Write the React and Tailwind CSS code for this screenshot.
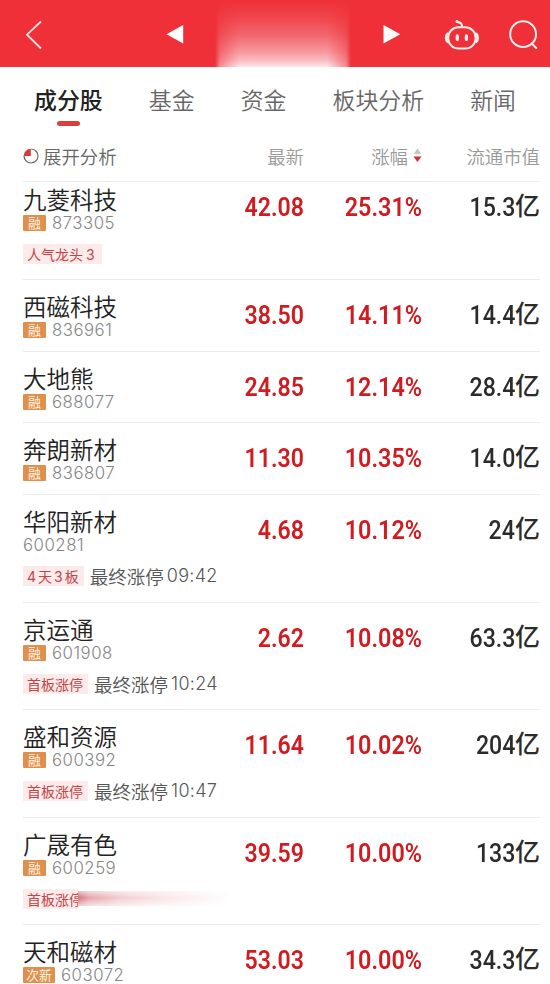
import React from 'react';

const tabs = [
  { label: '成分股', active: true },
  { label: '基金' },
  { label: '资金' },
  { label: '板块分析' },
  { label: '新闻' },
];

const stocks = [
  { name: '九菱科技', badge: '融', code: '873305', price: '42.08', change: '25.31%', cap: '15.3', tag: '人气龙头3' },
  { name: '西磁科技', badge: '融', code: '836961', price: '38.50', change: '14.11%', cap: '14.4' },
  { name: '大地熊', badge: '融', code: '688077', price: '24.85', change: '12.14%', cap: '28.4' },
  { name: '奔朗新材', badge: '融', code: '836807', price: '11.30', change: '10.35%', cap: '14.0' },
  { name: '华阳新材', code: '600281', price: '4.68', change: '10.12%', cap: '24', tag: '4天3板', time: '09:42' },
  { name: '京运通', badge: '融', code: '601908', price: '2.62', change: '10.08%', cap: '63.3', tag: '首板涨停', time: '10:24' },
  { name: '盛和资源', badge: '融', code: '600392', price: '11.64', change: '10.02%', cap: '204', tag: '首板涨停', time: '10:47' },
  { name: '广晟有色', badge: '融', code: '600259', price: '39.59', change: '10.00%', cap: '133', tag: '首板涨停', masked: true },
  { name: '天和磁材', badge: '次新', code: '603072', price: '53.03', change: '10.00%', cap: '34.3' },
];

function Header() {
  return (
    <header className="flex h-[67px] shrink-0 items-start bg-[#ef3038] text-white">
      <svg className="ml-[25px] mt-[20px] h-[30px] w-[18px]" viewBox="0 0 18 30" fill="none" stroke="#ffe3e0" strokeWidth="1.8">
        <path d="M16 1.5 2 14.7 16 28.5" />
      </svg>
      <svg className="ml-[123px] mt-[25px] h-[19px] w-[18px]" viewBox="0 0 18 19" fill="currentColor">
        <path d="M0.5 9.3 17.2 0V18.6Z" />
      </svg>
      <div className="ml-[31px] h-[67px] w-[136px] bg-[linear-gradient(to_bottom,#ef3038_0%,#f0444b_25%,#f2666d_52%,#f6959b_76%,#f9bcc1_90%,#fde6e8_100%)] [mask-image:linear-gradient(to_right,transparent,#0008_5px,#000_24px,#000_112px,#0008_131px,transparent)]" />
      <svg className="ml-[32px] mt-[25px] h-[19px] w-[18px]" viewBox="0 0 18 19" fill="currentColor">
        <path d="M0.5 0 17.2 9.3 0.5 18.6Z" />
      </svg>
      <svg className="ml-[43px] mt-[18px] h-[34px] w-[36px]" viewBox="0 0 36 34" fill="none" stroke="#fff0ed" strokeWidth="2" strokeLinecap="round">
        <rect x="4.2" y="9.2" width="27.4" height="21.4" rx="10.3" />
        <path d="M18 9V7.6C18 5.4 16.4 4.4 13.2 3.9" />
        <circle cx="13" cy="3.5" r="1.1" fill="#fff0ed" strokeWidth="1" />
        <path d="M3.6 15.8C1.6 17.2 1.6 22.4 3.6 23.8M32.2 15.8C34.2 17.2 34.2 22.4 32.2 23.8" strokeWidth="2.6" />
        <path d="M13.3 17.8V21.4M22.4 17.8V21.4" strokeWidth="3.2" />
      </svg>
      <svg className="ml-[28px] mt-[19px] h-[32px] w-[32px]" viewBox="0 0 32 32" fill="none" stroke="#fff0ed" strokeWidth="2" strokeLinecap="round">
        <circle cx="15.1" cy="15.2" r="12.9" />
        <path d="M23.8 24.6 28.3 29" />
      </svg>
    </header>
  );
}

function Tabs() {
  return (
    <nav className="flex h-[65px] shrink-0 items-start justify-between pl-[34px] pr-[34px] pt-[15px] text-[22.9px] leading-[34px] text-[#666]">
      {tabs.map(({ label, active }) => (
        <div key={label} className={active ? 'flex flex-col items-center font-medium text-[#222]' : 'font-[350]'}>
          {label}
          {active && <span className="mt-[5px] h-[5px] w-[23px] rounded-full bg-[#d9403c]" />}
        </div>
      ))}
    </nav>
  );
}

function ColumnHeads() {
  return (
    <div className="ml-[23px] mr-[10px] flex h-[50px] shrink-0 items-center border-b border-[#ebebeb] pb-[2px] text-[18.4px] font-[350] leading-[26px] text-[#999]">
      <div className="flex w-[170px] items-center text-[#666]">
        <svg className="mr-[4px] h-[16px] w-[16px]" viewBox="0 0 16 16" fill="none">
          <path d="M8.3 1A7 7 0 1 1 1 8" stroke="#666" strokeWidth="1.2" />
          <path d="M7.8 8V0.8A7.2 7.2 0 0 0 0.6 8Z" fill="#d83a3a" />
        </svg>
        展开分析
      </div>
      <div className="w-[111px] text-right">最新</div>
      <div className="flex w-[118px] items-center justify-end">
        涨幅
        <svg className="ml-[5px] h-[15px] w-[9px]" viewBox="0 0 9 15">
          <path d="M4.5 0.5 8.3 6H0.7Z" fill="#c4c4c4" />
          <path d="M0.5 8.5H8.5L4.5 14Z" fill="#cc3038" />
        </svg>
      </div>
      <div className="flex-1 text-right">流通市值</div>
    </div>
  );
}

function StockRow({ stock, first }) {
  const { name, badge, code, price, change, cap, tag, time, masked } = stock;
  return (
    <div
      className={`ml-[23px] mr-[10px] flex shrink-0 items-start border-b border-[#ebebeb] ${
        first ? 'h-[98px] pt-[4px]' : tag ? 'h-[107.6px] pt-[13px]' : 'h-[71.7px] pt-[13px]'
      }`}
    >
      <div className="w-[200px]">
        <div className="h-[28px] text-[23.5px] font-[350] leading-[27px] text-[#222]">{name}</div>
        <div className="flex h-[18px] items-center">
          {badge && (
            <span
              className={`mr-[6px] flex h-[16px] items-center justify-center whitespace-nowrap rounded-[1px] bg-[#e08f4c] text-[12.8px] leading-[16px] text-[#fff3e2] ${
                badge.length > 1 ? 'w-[32px]' : 'w-[23px]'
              }`}
            >
              {badge}
            </span>
          )}
          <span className="font-[Inter] text-[16.8px] font-light leading-[18px] tracking-[0.5px] text-[#858585]">{code}</span>
        </div>
        {tag && (
          <div className="mt-[12px] flex h-[20px] items-center">
            <span
              className={`h-[20px] shrink-0 whitespace-nowrap bg-[#fdebeb] pl-[4px] text-[14px] leading-[20px] text-[#c24444] ${
                masked ? 'w-[55px] overflow-hidden' : 'pr-[5px]'
              }`}
            >
              {tag.split(/(\d)/).map((part, i) =>
                /\d/.test(part) ? (
                  <span key={i} className={`font-[Inter] ${i > 1 ? 'mx-[2px]' : 'mr-[2px]'} ${time ? '' : 'ml-[3px]'}`}>{part}</span>
                ) : (
                  part
                )
              )}
            </span>
            {time && (
              <span className="ml-[6px] flex whitespace-nowrap text-[18.5px] font-[350] leading-[20px] text-[#555]">
                最终涨停
                <span className="ml-[3px] font-[Inter] text-[18px] tracking-[0.3px]">{time}</span>
              </span>
            )}
            {masked && (
              <span className="h-[15px] w-[152px] shrink-0 bg-[linear-gradient(to_right,#d0727a_0%,#e6a5ab_7%,#f4cdd0_28%,#fae5e6_55%,#fff_100%)] [mask-image:linear-gradient(to_bottom,#0006,#000_45%,#0005)]" />
            )}
          </div>
        )}
      </div>
      <div className={`flex flex-1 font-[Roboto,'Noto_Sans_CJK_SC',sans-serif] text-[25.4px] font-semibold leading-[30px] text-[#d01c20] ${first ? 'pt-[6px]' : 'pt-[7px]'}`}>
        <div className="w-[81px] origin-right scale-x-[0.91] text-right">{price}</div>
        <div className="w-[118px] origin-right scale-x-[0.92] text-right">{change}</div>
        <div className="flex flex-1 justify-end font-medium text-[#2b2b2b]">
          <span className="origin-right scale-x-[0.91]">{cap}</span>
          <span className="text-[25px]">亿</span>
        </div>
      </div>
    </div>
  );
}

export default function App() {
  return (
    <div className="flex h-[984px] w-[550px] flex-col overflow-hidden bg-white font-['Noto_Sans_CJK_SC',sans-serif]">
      <Header />
      <Tabs />
      <ColumnHeads />
      {stocks.map((stock, i) => (
        <StockRow key={stock.code} stock={stock} first={i === 0} />
      ))}
    </div>
  );
}
